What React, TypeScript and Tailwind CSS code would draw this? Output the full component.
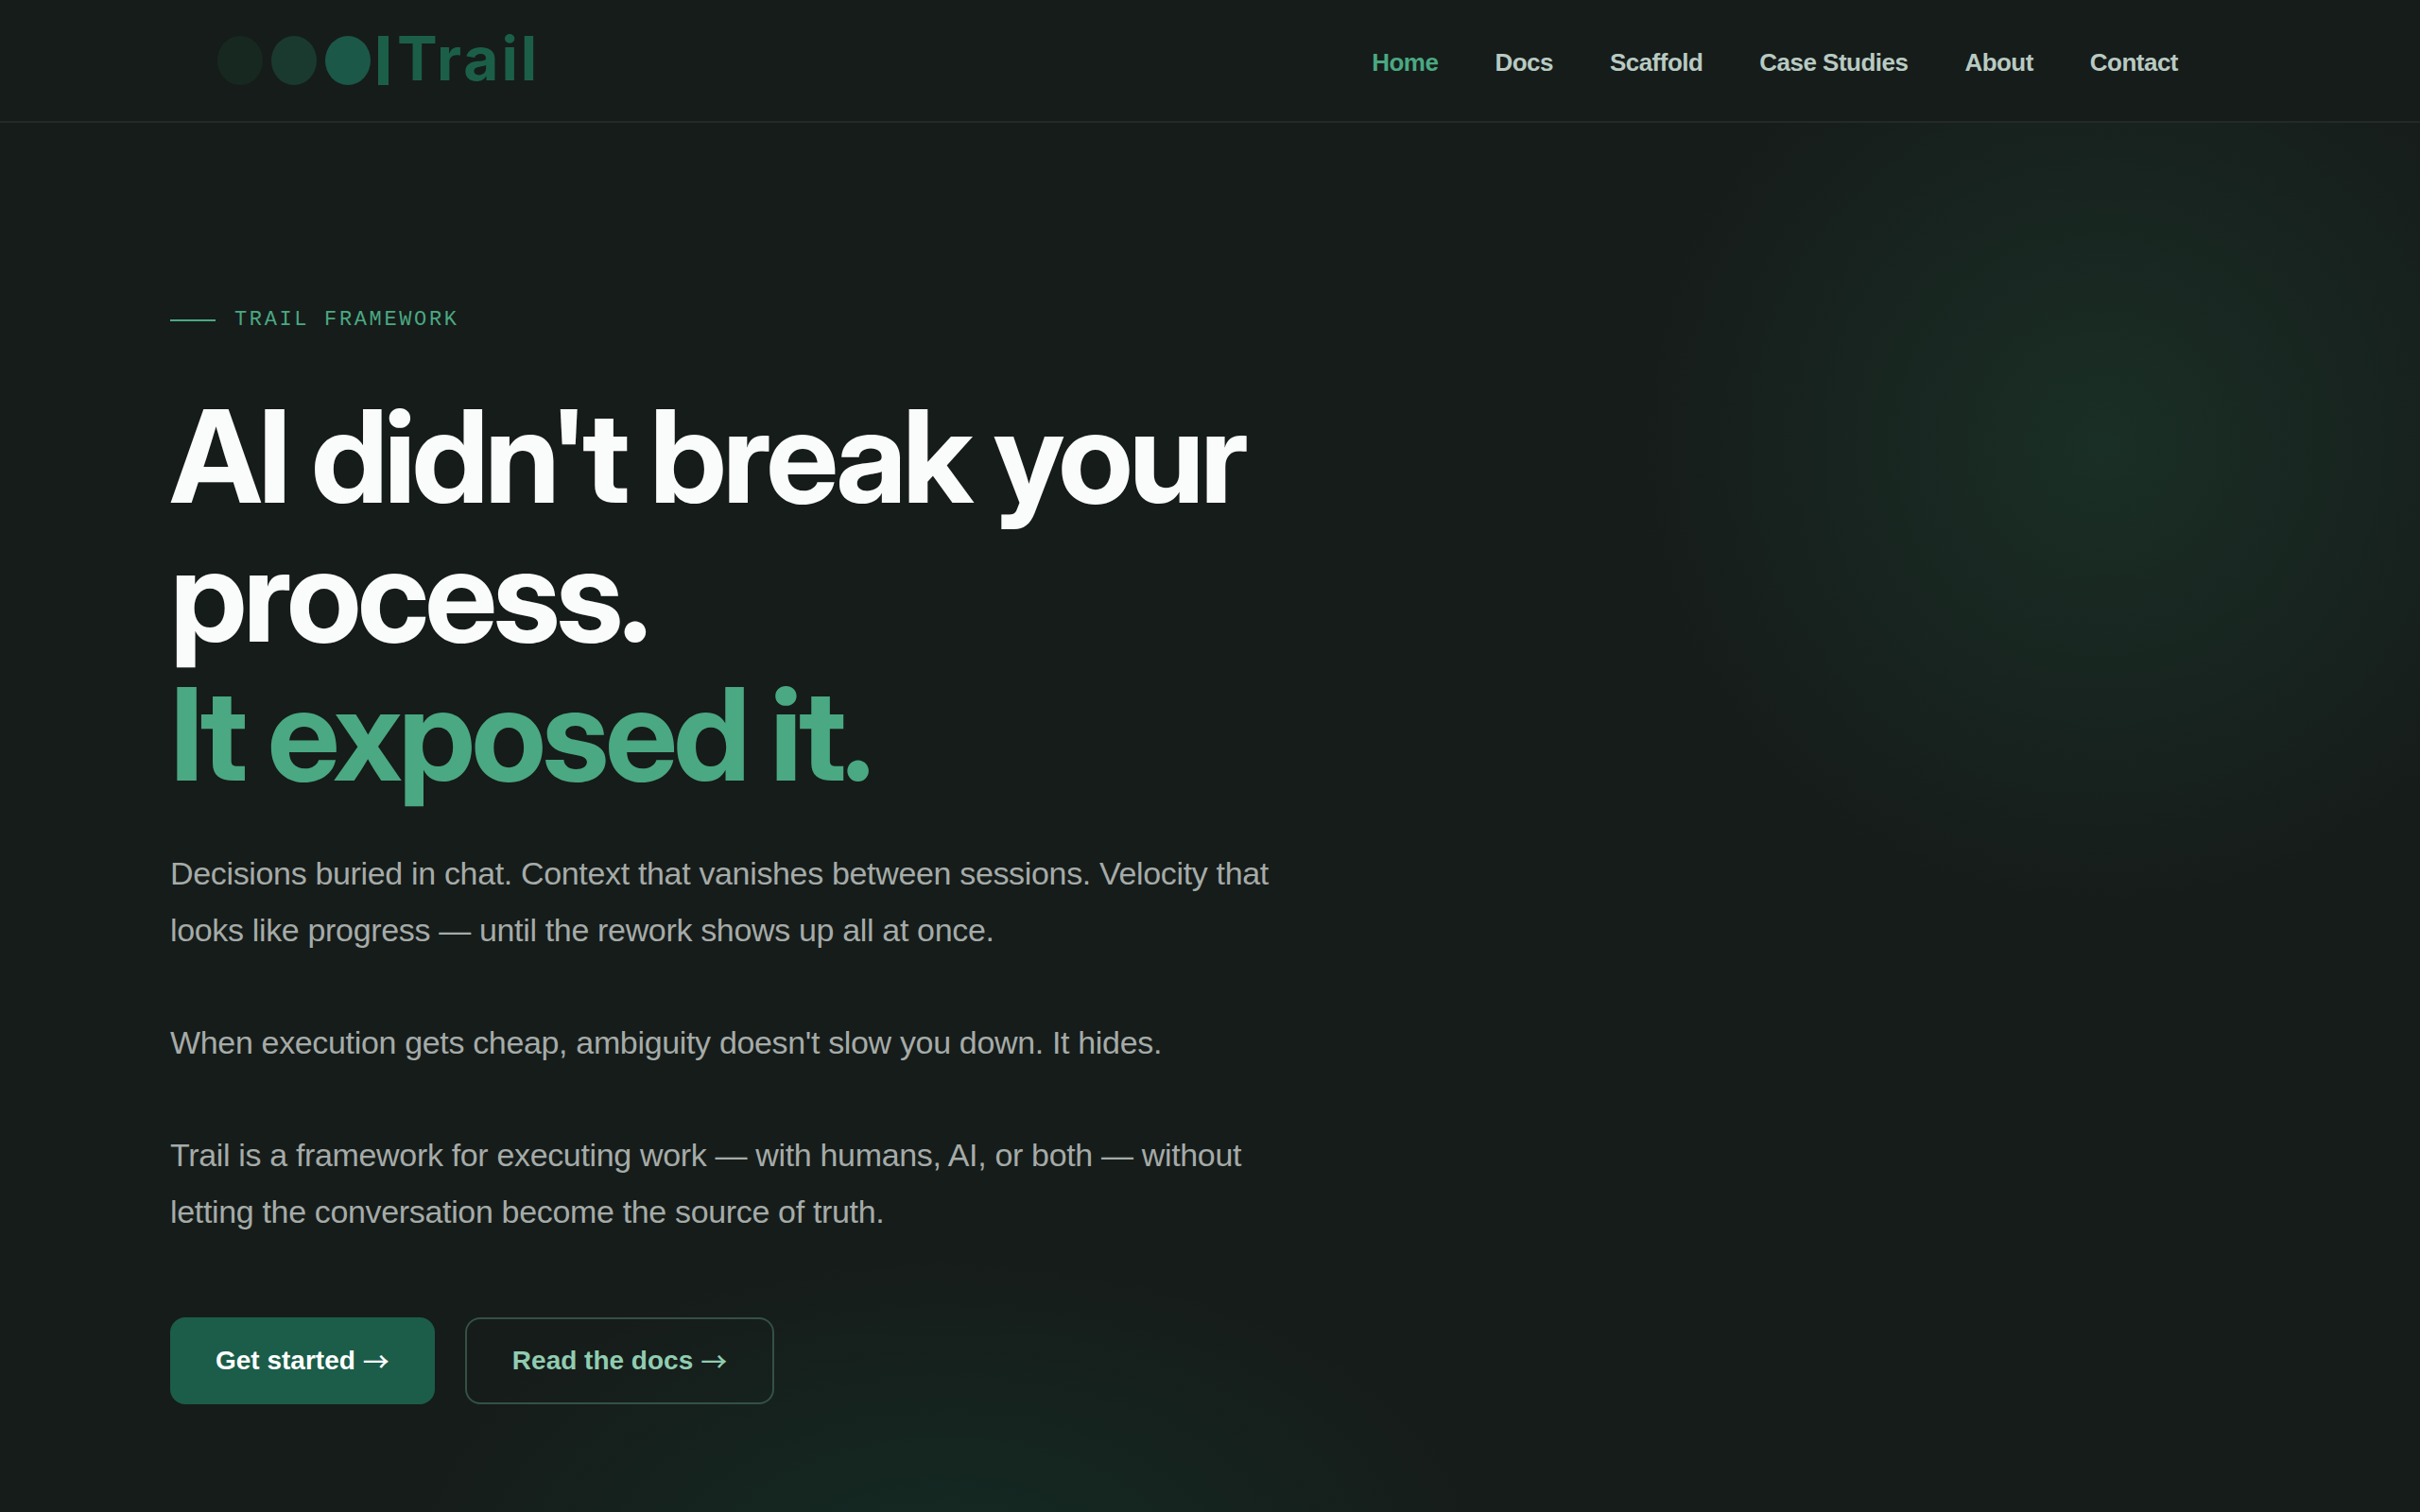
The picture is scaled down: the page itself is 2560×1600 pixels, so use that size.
const links = [
    { title: "Home", href: "#home", active: true },
    { title: "Docs", href: "#docs" },
    { title: "Scaffold", href: "#scaffold" },
    { title: "Case Studies", href: "#case-studies" },
    { title: "About", href: "#about" },
    { title: "Contact", href: "#contact" },
];

function Logo() {
    return (
        <a href="#home" aria-label="Trail" className="flex shrink-0 items-center">
            <svg viewBox="0 0 184 54" className="h-[54px] w-[184px]" aria-hidden="true">
                <ellipse cx="26" cy="27" rx="24" ry="26" fill="#172821" />
                <ellipse cx="83" cy="27" rx="24" ry="26" fill="#1a3a2f" />
                <ellipse cx="140" cy="27" rx="24" ry="26" fill="#1b5847" />
                <rect x="172" y="1" width="11" height="52" fill="#1c5f49" />
            </svg>
            <span className="ml-2 pb-1 font-['Inter',sans-serif] text-[64px] leading-[54px] font-bold tracking-[3px] text-[#1c5f49]">
                Trail
            </span>
        </a>
    )
}

function Header() {
    return (
        <header className="border-b-2 border-[#232a28] bg-[#161c1a]">
            <div className="mx-auto flex h-32 max-w-[2200px] items-center justify-between px-12">
                <Logo />

                <nav className="flex gap-1">
                    {links.map((link) => (
                        <a
                            key={link.href}
                            href={link.href}
                            className={`px-7 pt-4 pb-3 text-[26px] leading-8 font-bold tracking-[-0.02em] whitespace-nowrap ${link.active ? "text-[#4aa882]" : "text-[#b8cac2]"}`}
                        >
                            {link.title}
                        </a>
                    ))}
                </nav>
            </div>
        </header>
    )
}

function Hero() {
    return (
        <section className="relative flex-1 overflow-hidden">
            {/* Glows */}
            <div
                aria-hidden="true"
                className="absolute -top-[150px] -right-[154px] size-[980px] bg-[radial-gradient(closest-side,#1a2f26,#161c1a)]"
            />
            <div
                aria-hidden="true"
                className="absolute -bottom-[412px] left-[421px] h-[684px] w-[1160px] bg-[radial-gradient(closest-side,#142b24,#161c1a)]"
            />

            <div className="relative mx-auto max-w-[2200px] pt-[193px] pb-16">
                <div className="max-w-[1200px]">
                    {/* Eyebrow */}
                    <p className="flex items-center gap-5 font-['Liberation_Mono',monospace] text-[22px] leading-8 tracking-[0.12em] text-[#4aa882] uppercase">
                        <span className="h-0.5 w-12 bg-[#4aa882]" />
                        Trail Framework
                    </p>

                    <h1 className="mt-[54px] font-['Inter_Display','Inter',sans-serif] text-[136px] leading-[147px] font-bold tracking-[-0.03em] text-[#fafcfb]">
                        AI didn't break your process.
                        <span className="block text-[#4aa882]">It exposed it.</span>
                    </h1>

                    <div className="mt-11 space-y-[59px] text-[34px] leading-[60px] tracking-[-0.01em] text-[#a5aba8]">
                        <p>
                            Decisions buried in chat. Context that vanishes between sessions. Velocity that
                            looks like progress — until the rework shows up all at once.
                        </p>
                        <p>When execution gets cheap, ambiguity doesn't slow you down. It hides.</p>
                        <p>
                            Trail is a framework for executing work — with humans, AI, or both — without
                            letting the conversation become the source of truth.
                        </p>
                    </div>

                    {/* Buttons */}
                    <div className="mt-[82px] flex gap-8 text-[28px] leading-8 font-bold">
                        <a
                            href="#get-started"
                            className="flex h-[92px] items-center gap-2 rounded-2xl bg-[#1b5d49] px-12 text-white"
                        >
                            Get started
                            <span className="font-['Noto_Sans_CJK_JP',sans-serif] font-medium">→</span>
                        </a>
                        <a
                            href="#docs"
                            className="flex h-[92px] items-center gap-2 rounded-2xl border-2 border-[#345145] px-12 text-[#90ccb1]"
                        >
                            Read the docs
                            <span className="font-['Noto_Sans_CJK_JP',sans-serif] font-medium">→</span>
                        </a>
                    </div>
                </div>
            </div>
        </section>
    )
}

export default function App() {
    return (
        <div className="flex min-h-screen flex-col bg-[#161c1a] font-['Liberation_Sans',Arial,sans-serif]">
            <Header />
            <Hero />
        </div>
    )
}
